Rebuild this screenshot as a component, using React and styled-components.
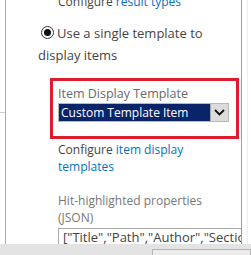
import React from "react";
import styled, { createGlobalStyle } from "styled-components";

const Global = createGlobalStyle`
  html, body {
    margin: 0;
    padding: 0;
    background: #fff;
    overflow: hidden;
  }
  body {
    font-family: "Open Sans", "Liberation Sans", sans-serif;
  }
`;

const Page = styled.div`
  width: 251px;
  height: 255px;
  display: flex;
  flex-direction: column;
  overflow: hidden;
`;

const Main = styled.div`
  flex: 1;
  display: flex;
  min-height: 0;
`;

const Gutter = styled.div`
  width: 5px;
  padding-top: 112px;
  div {
    height: 1px;
    background: #cfcfcf;
  }
`;

const Panel = styled.div`
  width: 237px;
  border-left: 1px solid #ababab;
  border-right: 1px solid #9c9c9c;
  overflow: hidden;
  padding-left: 32px;
  box-sizing: border-box;
`;

const RightEdge = styled.div`
  width: 5px;
  border-right: 1px solid #eeeeee;
`;

const Content = styled.div`
  margin-top: -7px;
  font-size: 12px;
  line-height: 17px;
  color: #444;
`;

const Line = styled.div`
  margin-left: 20px;
  color: ${(p) => p.color || "#444"};
  margin-top: ${(p) => p.top || 0}px;
  white-space: ${(p) => (p.nowrap ? "nowrap" : "normal")};
  width: 175px;
`;

const Link = styled.span`
  color: #0072c6;
`;

const RadioLabel = styled.div`
  margin-top: 12px;
  width: 172px;
  line-height: 22px;
  font-size: 13px;
  color: #444;
`;

const Radio = styled.span`
  display: inline-block;
  width: 11px;
  height: 11px;
  border: 1px solid #333;
  border-radius: 50%;
  margin: 0 3px 0 3px;
  vertical-align: -1px;
  position: relative;
  &::after {
    content: "";
    position: absolute;
    left: 2px;
    top: 2px;
    width: 7px;
    height: 7px;
    border-radius: 50%;
    background: #111;
  }
`;

const Highlight = styled.div`
  margin: 12px 0 0 12px;
  width: 189px;
  height: 61px;
  box-sizing: border-box;
  border: 3px solid #dd1d2b;
  padding: 4px 6px 0 5px;
`;

const FieldLabel = styled.div`
  font-size: 12.5px;
  line-height: 17px;
  color: #6a6a6a;
`;

const Select = styled.div`
  margin-top: 1px;
  display: flex;
  height: 19px;
  width: 171px;
  border: 1px solid #b8b8b8;
  box-sizing: border-box;
`;

const Selected = styled.div`
  flex: 1;
  background: #0a246a;
  color: #fff;
  font-size: 12px;
  line-height: 17px;
  padding-left: 2px;
  white-space: nowrap;
  overflow: hidden;
`;

const Arrow = styled.div`
  width: 17px;
  background: #dcdcdc;
  border-left: 1px solid #a9a9a9;
  display: flex;
  align-items: center;
  justify-content: center;
`;

const Input = styled.div`
  margin: 2px 0 0 20px;
  height: 18px;
  width: 200px;
  border: 1px solid #ababab;
  box-sizing: border-box;
  font-size: 13px;
  line-height: 17px;
  padding-left: 4px;
  color: #444;
  white-space: nowrap;
  overflow: hidden;
`;

const Footer = styled.div`
  height: 11px;
  background: #e3e3e3;
  padding: 5px 0 0 152px;
  box-sizing: border-box;
  div {
    height: 100%;
    width: 99px;
    border: 1px solid #b5b5b5;
    border-bottom: none;
    background: #ebebeb;
    box-sizing: border-box;
  }
`;

export default function App() {
  return (
    <Page>
      <Global />
      <Main>
        <Gutter>
          <div />
        </Gutter>
        <Panel>
          <Content>
            <Line nowrap>
              Configure <Link>result types</Link>
            </Line>
            <RadioLabel>
              <Radio />
              Use a single template to display items
            </RadioLabel>
            <Highlight>
              <FieldLabel>Item Display Template</FieldLabel>
              <Select>
                <Selected>Custom Template Item</Selected>
                <Arrow>
                  <svg width="11" height="7" viewBox="0 0 11 7">
                    <polyline
                      points="1,1 5.5,5.5 10,1"
                      fill="none"
                      stroke="#111"
                      strokeWidth="1.8"
                    />
                  </svg>
                </Arrow>
              </Select>
            </Highlight>
            <Line top={2}>
              Configure <Link>item display templates</Link>
            </Line>
            <Line top={17} color="#777">
              Hit-highlighted properties (JSON)
            </Line>
            <Input>["Title","Path","Author","SectionNames","SiteDescription"]</Input>
          </Content>
        </Panel>
        <RightEdge />
      </Main>
      <Footer>
        <div />
      </Footer>
    </Page>
  );
}
